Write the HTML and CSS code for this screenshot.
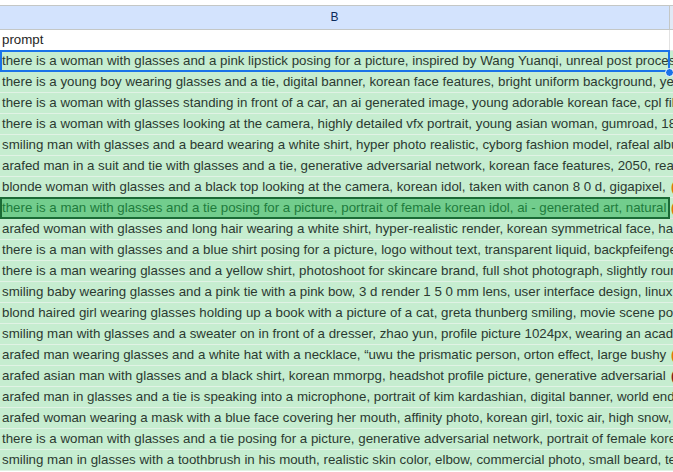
FILE: index.html
```html
<!DOCTYPE html>
<html>
<head>
<meta charset="utf-8">
<link rel="stylesheet" href="styles.css">
</head>
<body>
<div class="sheet">
  <div class="topstrip"></div>
  <div class="hdr"><div class="hb">B</div><div class="hc"></div></div>
  <div class="row plain"><div class="cb">prompt</div><div class="cc"></div></div>
  <div class="row g sel"><div class="cb">there is a woman with glasses and a pink lipstick posing for a picture, inspired by Wang Yuanqi, unreal post processing, octane render</div><span class="handle"></span></div>
  <div class="row g"><div class="cb">there is a young boy wearing glasses and a tie, digital banner, korean face features, bright uniform background, yellow shirt</div></div>
  <div class="row g"><div class="cb">there is a woman with glasses standing in front of a car, an ai generated image, young adorable korean face, cpl filter, photo</div></div>
  <div class="row g"><div class="cb">there is a woman with glasses looking at the camera, highly detailed vfx portrait, young asian woman, gumroad, 18 years old</div></div>
  <div class="row g"><div class="cb">smiling man with glasses and a beard wearing a white shirt, hyper photo realistic, cyborg fashion model, rafeal albuquerque</div></div>
  <div class="row g"><div class="cb">arafed man in a suit and tie with glasses and a tie, generative adversarial network, korean face features, 2050, realistic</div></div>
  <div class="row g clip"><div class="cb">blonde woman with glasses and a black top looking at the camera, korean idol, taken with canon 8 0 d, gigapixel, </div><div class="cc o">(</div></div>
  <div class="row hi clip"><div class="cb">there is a man with glasses and a tie posing for a picture, portrait of female korean idol, ai - generated art, natural</div><div class="cc o">(</div></div>
  <div class="row g"><div class="cb">arafed woman with glasses and long hair wearing a white shirt, hyper-realistic render, korean symmetrical face, happy</div></div>
  <div class="row g"><div class="cb">there is a man with glasses and a blue shirt posing for a picture, logo without text, transparent liquid, backpfeifengesicht</div></div>
  <div class="row g"><div class="cb">there is a man wearing glasses and a yellow shirt, photoshoot for skincare brand, full shot photograph, slightly round face</div></div>
  <div class="row g"><div class="cb">smiling baby wearing glasses and a pink tie with a pink bow, 3 d render 1 5 0 mm lens, user interface design, linux mint</div></div>
  <div class="row g"><div class="cb">blond haired girl wearing glasses holding up a book with a picture of a cat, greta thunberg smiling, movie scene portrait</div></div>
  <div class="row g"><div class="cb">smiling man with glasses and a sweater on in front of a dresser, zhao yun, profile picture 1024px, wearing an academic gown</div></div>
  <div class="row g clip"><div class="cb">arafed man wearing glasses and a white hat with a necklace, “uwu the prismatic person, orton effect, large bushy </div><div class="cc o">(</div></div>
  <div class="row g clip"><div class="cb">arafed asian man with glasses and a black shirt, korean mmorpg, headshot profile picture, generative adversarial </div><div class="cc r">(</div></div>
  <div class="row g"><div class="cb">arafed man in glasses and a tie is speaking into a microphone, portrait of kim kardashian, digital banner, world end</div></div>
  <div class="row g"><div class="cb">arafed woman wearing a mask with a blue face covering her mouth, affinity photo, korean girl, toxic air, high snow, cold</div></div>
  <div class="row g"><div class="cb">there is a woman with glasses and a tie posing for a picture, generative adversarial network, portrait of female korean idol</div></div>
  <div class="row g"><div class="cb">smiling man in glasses with a toothbrush in his mouth, realistic skin color, elbow, commercial photo, small beard, teeth</div></div>
</div>
</body>
</html>
```
FILE: styles.css
```css
html, body {
  margin: 0;
  padding: 0;
  background: #ffffff;
}
body {
  font-family: "Liberation Sans", Arial, sans-serif;
  font-size: 13.3px;
  color: #1f1f1f;
  overflow: hidden;
  width: 673px;
  height: 472px;
}
.sheet {
  display: flex;
  flex-direction: column;
  width: 673px;
  overflow: hidden;
}
.topstrip {
  height: 5px;
  background: #ffffff;
}
.hdr {
  display: flex;
  height: 23px;
  border-top: 1px solid #c4c7c5;
  border-bottom: 1px solid #c4c7c5;
  background: #d3e3fd;
}
.hb {
  width: 669px;
  flex: none;
  border-right: 1px solid #c4c7c5;
  text-align: center;
  line-height: 23px;
  font-size: 12px;
  color: #0b2a5a;
}
.hc {
  flex: 1;
  background: #e1e9f5;
}
.row {
  display: flex;
  height: 20px;
  border-bottom: 1px solid #e2e2e2;
  position: relative;
  line-height: 20px;
  white-space: nowrap;
}
.row .cb {
  flex: none;
  width: 669px;
  padding-left: 2px;
  box-sizing: border-box;
  overflow: visible;
}
.plain .cb {
  border-right: 1px solid #e2e2e2;
  width: 670px;
}
.plain .cc { flex: 1; }
.g {
  background: #c6edd0;
  border-bottom-color: #e1f2e5;
  color: #2b3a30;
}
.clip .cb {
  overflow: hidden;
  width: 670px;
}
.cc {
  flex: 1;
  overflow: hidden;
  padding-left: 1px;
  font-weight: bold;
}
.cc.o { color: #e8710a; }
.cc.r { color: #8a1b1b; }
.hi {
  background: #72cd8d;
  color: #1e7b3c;
}
.hi::after {
  content: "";
  position: absolute;
  left: 0;
  top: -1px;
  width: 670px;
  height: 22px;
  border: 2px solid #1b6b36;
  box-sizing: border-box;
  pointer-events: none;
}
.hi .cc { background: #c6edd0; }
.sel::after {
  content: "";
  position: absolute;
  left: 0;
  top: -1px;
  width: 670px;
  height: 22px;
  border: 2px solid #1a73e8;
  box-sizing: border-box;
  pointer-events: none;
}
.handle {
  position: absolute;
  left: 665px;
  top: 17px;
  width: 7px;
  height: 7px;
  border-radius: 50%;
  background: #1a73e8;
  border: 1px solid #ffffff;
  z-index: 2;
}
```
